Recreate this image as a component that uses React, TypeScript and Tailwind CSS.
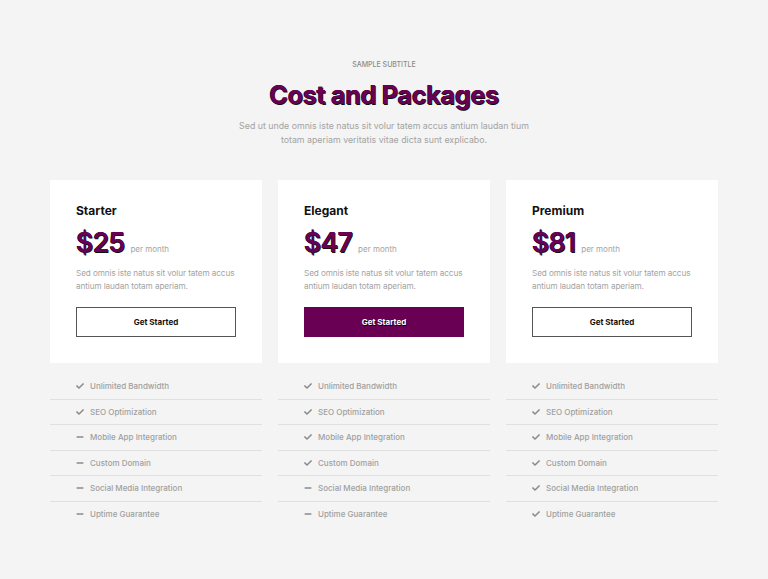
import { FaCheck, FaMinus } from 'react-icons/fa'

interface Plan {
  name: string
  price: string
  featured?: boolean
  included: boolean[]
}

const features = [
  'Unlimited Bandwidth',
  'SEO Optimization',
  'Mobile App Integration',
  'Custom Domain',
  'Social Media Integration',
  'Uptime Guarantee',
]

const plans: Plan[] = [
  { name: 'Starter', price: '$25', included: [true, true, false, false, false, false] },
  { name: 'Elegant', price: '$47', featured: true, included: [true, true, true, true, false, false] },
  { name: 'Premium', price: '$81', included: [true, true, true, true, true, true] },
]

export default function App() {
  return (
    <div className="min-h-[579px] bg-[#f4f4f4] pt-[60px] pb-[40px] font-['Inter',sans-serif]">
      <div className="text-center">
        <p className="text-[7px] leading-[10px] uppercase text-[#8a8a8a] font-medium">Sample Subtitle</p>
        <h1 className="mt-[9px] text-[25.5px] leading-[32px] font-bold tracking-[-0.5px] text-[#6a0054] [text-shadow:0.7px_0.7px_0_#111,-0.4px_-0.4px_0_#111]">
          Cost and Packages
        </h1>
        <p className="mt-[8px] mx-auto w-[300px] text-[8.8px] leading-[14px] text-[#a3a3a3]">
          Sed ut unde omnis iste natus sit volur tatem accus antium laudan tium totam aperiam veritatis vitae dicta sunt explicabo.
        </p>
      </div>

      <div className="mx-auto mt-[33px] w-[668px] grid grid-cols-3 gap-[16px]">
        {plans.map((plan) => (
          <div key={plan.name}>
            <div className="bg-white px-[26px] pt-[23px] pb-[26px]">
              <h3 className="text-[12px] leading-[16px] font-bold text-[#111]">{plan.name}</h3>
              <div className="mt-[8px] flex items-end gap-[6px]">
                <span className="text-[27px] leading-[32px] font-semibold tracking-[-1px] text-[#6a0054] [text-shadow:0.6px_0.6px_0_#111,-0.4px_-0.4px_0_#111]">
                  {plan.price}
                </span>
                <span className="text-[8px] leading-[16px] text-[#a3a3a3] mb-[2px]">per month</span>
              </div>
              <p className="mt-[8px] text-[8.2px] leading-[13px] tracking-[-0.1px] text-[#a3a3a3]">
                Sed omnis iste natus sit volur tatem accus antium laudan totam aperiam.
              </p>
              <button
                className={`mt-[14px] w-full h-[30px] text-[8px] font-bold border ${
                  plan.featured
                    ? 'bg-[#6a0054] border-[#6a0054] text-white [text-shadow:0.6px_0.6px_0_#000]'
                    : 'bg-white border-[#555] text-[#111]'
                }`}
              >
                Get Started
              </button>
            </div>
            <ul className="mt-[11px]">
              {features.map((f, i) => (
                <li
                  key={f}
                  className={`h-[25.5px] flex items-center gap-[6px] pl-[26px] ${
                    i < features.length - 1 ? 'border-b border-[#e0e0e0]' : ''
                  }`}
                >
                  {plan.included[i] ? (
                    <FaCheck className="w-[8px] h-[8px] text-[#8a8a8a]" />
                  ) : (
                    <FaMinus className="w-[8px] h-[8px] text-[#8a8a8a]" />
                  )}
                  <span className="text-[8px] font-medium text-[#a0a0a0]">{f}</span>
                </li>
              ))}
            </ul>
          </div>
        ))}
      </div>
    </div>
  )
}
